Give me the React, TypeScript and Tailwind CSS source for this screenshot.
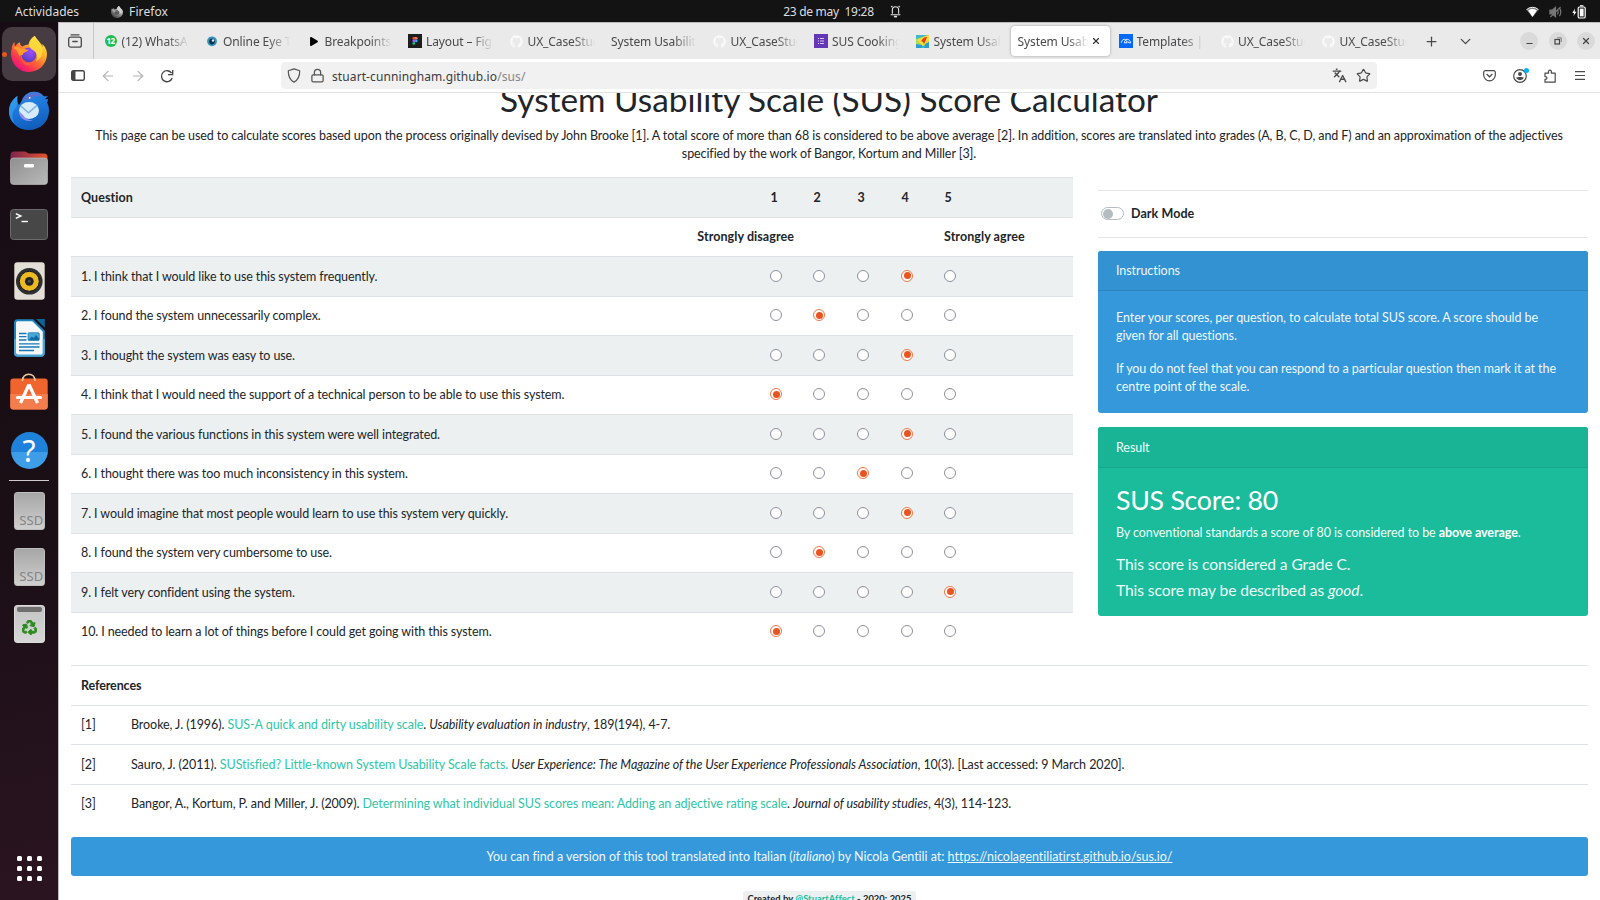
import type { ReactNode } from "react";
import { ArrowLeft, ArrowRight, Lock, Minus, Plus, ChevronDown, X, Star, Languages } from "lucide-react";
import { FaGithub, FaRecycle, FaPlay } from "react-icons/fa";

/* ---------- dock icons ---------- */

const FirefoxLogo = ({ className }: { className: string }) => (
  <svg viewBox="0 0 36 36" className={className}>
    <defs>
      <linearGradient id="ffBody" x1="0.85" y1="0.1" x2="0.2" y2="0.95">
        <stop offset="0" stopColor="#ffe73f" />
        <stop offset="0.3" stopColor="#ffb22c" />
        <stop offset="0.55" stopColor="#ff6b33" />
        <stop offset="0.8" stopColor="#fd2f56" />
        <stop offset="1" stopColor="#e60d8a" />
      </linearGradient>
      <radialGradient id="ffGlobe" cx="0.6" cy="0.3" r="0.8">
        <stop offset="0" stopColor="#a14bff" />
        <stop offset="1" stopColor="#4b3fb5" />
      </radialGradient>
    </defs>
    <path
      d="M34.6 12.6c-.8-1.9-2.300-3.900-3.600-4.500.4 1.100.7 2.200.8 3.200-1.900-4.800-5.200-6.700-7.800-11-.3-.4-.4-.7-.5-.3-4.200 2.400-5.600 6.300-5.800 8.400-2.500.1-4.600 1-6.300 2.100-2-.9-2.500-3.200-2.400-4.300C6.600 7 4.900 9.100 4.200 10.200c-.7-.9-.7-3-.6-4.300C1.900 7.300.8 10 .6 12.400l.5-.6C.3 14 .1 16 0 18.200.2 28 8.100 36 18 36c9.900 0 17.700-7.600 18-17.400 0-2.200-.4-4.200-1.400-6z"
      fill="url(#ffBody)"
    />
    <circle cx="18" cy="18.800" r="7.400" fill="url(#ffGlobe)" />
    <path d="M24 0c-4.500 3-6.400 7-5.300 11 1 2.800 4.500 3.200 6.300 6 1.500 2.600 1.400 5.700 0 8.200 4.600-2.300 6.700-6.600 6.300-11.500C30.600 8.500 26 5.500 24 0z" fill="#ffdc3e" opacity="0.85" />
    <path d="M2 12c3-2 5.500-1.500 8 .4 2.500.2 4.600.8 7.500 1.300-.4 1.600-3.500 2.600-4.400 3-1 .5-1 1.200-1 2.300-2.600-.8-3 .6-3.100 2C7 17 6 13 2 12z" fill="#ff9b2b" />
    <path d="M10 20c.6 4.700 5 7.500 9.500 6.500 2-.4 4-1.500 5.300-3.300-1 4.500-4.600 6.500-8 6.200-4.300-.4-7.300-4.900-6.800-9.400z" fill="#ff5a3c" />
  </svg>
);

const Thunderbird = () => (
  <svg viewBox="0 0 40 40" className="h-[40px] w-[40px]">
    <defs>
      <linearGradient id="tbBody" x1="0.3" y1="0" x2="0.6" y2="1">
        <stop offset="0" stopColor="#2f8be6" />
        <stop offset="0.5" stopColor="#1b74d8" />
        <stop offset="1" stopColor="#0f5cb8" />
      </linearGradient>
    </defs>
    <path d="M8.500 5C3.500 8-.5 14 0 22c.7 9.500 9 17 20 17s19.600-7.800 20-18.500c.1-3.500-.5-6.500-2-9 .7-.9 1-2.200 1-3.500l-3 .3c1-1 2-1.900 3-3.300-1.600.4-3 .4-4.500 0C32 1.500 28 .4 24 .8 18.500 1.300 15 4.500 13 9c-1 2-2 4-3 5-1.700-2.500-2.200-5.500-1.500-9z" fill="url(#tbBody)" />
    <path d="M14 9c2.500-5 7-7.800 13-7.200 3 .4 5 1.700 6.500 3.700-3-1.500-5-1.200-7.500-.3-4 1.600-5.500 4-12 3.800z" fill="#5a6fd0" />
    <path d="M8.500 5C3.500 8-.5 14 0 22c.6 4.300 2.500 8 5.500 10.600C2 26 3 20 7 16.500 9 12.500 7.800 9 8.500 5z" fill="#35a0ee" opacity="0.7" />
    <ellipse cx="20" cy="19.500" rx="10" ry="8.500" fill="#d7ecfb" />
    <path d="M11.500 14.800l8 7 8.800-7.600" fill="none" stroke="#7fb4e4" strokeWidth="1.600" />
    <path d="M10 20c0 7 6 11.500 14 9.500-6-1-8-2.500-9-4.500z" fill="#8f8df0" />
    <circle cx="20.700" cy="6.800" r="0.900" fill="#fff" />
  </svg>
);

const FilesIcon = () => (
  <svg viewBox="0 0 38 34" className="h-[34px] w-[38px]">
    <defs>
      <linearGradient id="fBack" x1="0" x2="1"><stop offset="0" stopColor="#7d2450" /><stop offset="1" stopColor="#e2542a" /></linearGradient>
      <linearGradient id="fFront" x1="0" y1="0" x2="1" y2="1"><stop offset="0" stopColor="#8f8f8f" /><stop offset="1" stopColor="#b9b9b9" /></linearGradient>
    </defs>
    <path d="M.5 4A3.500 3.500 0 0 1 4 .5h11l4 2h15A3.500 3.500 0 0 1 37.500 6v12H.5z" fill="url(#fBack)" />
    <rect x="0.500" y="7" width="37" height="26.500" rx="3" fill="url(#fFront)" stroke="#c4c4c4" strokeWidth="0.600" />
    <rect x="14" y="13" width="10" height="3.600" rx="1.300" fill="#fff" />
  </svg>
);

const TerminalIcon = () => (
  <svg viewBox="0 0 38 31" className="h-[31px] w-[38px]">
    <rect x="0.500" y="0.500" width="37" height="30" rx="3" fill="#474747" stroke="#6b6b6b" />
    <path d="M5.800 4.600l5 2.400-5 2.400" fill="none" stroke="#fff" strokeWidth="1.500" />
    <path d="M11.500 12.500h6.500" stroke="#fff" strokeWidth="1.400" />
  </svg>
);

const SpeakerIcon = () => (
  <svg viewBox="0 0 31 38" className="h-[38px] w-[31px]">
    <rect x="0.300" y="0.300" width="30.400" height="37.400" rx="3" fill="#e3dfd6" />
    <circle cx="15.300" cy="19.300" r="13.300" fill="#2e2f33" />
    <circle cx="15.300" cy="19.300" r="10" fill="#edbb21" />
    <circle cx="15.300" cy="19.300" r="10" fill="none" stroke="#17181b" strokeWidth="1" />
    <circle cx="15.300" cy="19.300" r="4.400" fill="#222327" />
    <circle cx="15.300" cy="19.300" r="1.500" fill="#4a4b50" />
  </svg>
);

const WriterIcon = () => (
  <svg viewBox="0 0 31 38" className="h-[38px] w-[31px]">
    <path d="M22 0h8.800v8.800z" fill="#0c6596" />
    <path d="M3.500 1.200h15.300l11 11V34a2.800 2.800 0 0 1-2.800 2.800H3.800A2.800 2.800 0 0 1 1 34V4a2.700 2.700 0 0 1 2.500-2.800z" fill="#f6f8fa" stroke="#1d84bd" strokeWidth="2" />
    <path d="M1 20v14a2.800 2.800 0 0 0 2.800 2.800H27a2.800 2.800 0 0 0 2.800-2.800V20" fill="none" stroke="#4ba7d6" strokeWidth="2" />
    <path d="M5 14.500h7.500M5 17.700h7.500M5 21h7.500M5 24.800h20.500M5 28h20.500M5 31.500h15" stroke="#1679b5" strokeWidth="1.300" />
    <rect x="14" y="13.700" width="11.300" height="7.800" rx="1" fill="#4ba7d6" stroke="#1679b5" strokeWidth="0.700" />
    <path d="M14.500 21l3.300-3.500 1.800 1.500 2.400-3 3 3.500V21z" fill="#0f6ba4" />
  </svg>
);

const SoftwareIcon = () => (
  <svg viewBox="0 0 38 37" className="mb-[5px] h-[37px] w-[38px]">
    <path d="M12.500 8c0-4 2.500-6.800 6.300-6.800S25 4 25 8" fill="none" stroke="#ecc9a0" strokeWidth="1.500" />
    <rect x="0.300" y="5.500" width="37.400" height="31" rx="3" fill="#f0642e" />
    <path d="M.3 21h37.400v12.500a3 3 0 0 1-3 3H3.300a3 3 0 0 1-3-3z" fill="#f37d4c" />
    <path d="M12.500 8c0-1.500.3-2.700.8-3.600M25 8c0-1.500-.3-2.700-.8-3.600" fill="none" stroke="#ecc9a0" strokeWidth="1.500" />
    <path d="M19 11.500L10.500 30M19 11.500L27.500 30" stroke="#fff" strokeWidth="3.300" fill="none" strokeLinejoin="round" />
    <path d="M7.500 24.500h23" stroke="#fff" strokeWidth="3.200" strokeLinecap="round" />
  </svg>
);

const HelpIcon = () => (
  <div className="flex h-[37px] w-[37px] items-center justify-center rounded-full bg-[linear-gradient(#1f82da_0_55%,#3d9de6_55%_100%)] font-['Noto_Sans',sans-serif] text-[30px] leading-none text-white">
    ?
  </div>
);

const SsdIcon = () => (
  <div className="flex h-[38px] w-[31px] items-end justify-end overflow-hidden rounded-[3px] border border-[#bdbdbd] bg-[linear-gradient(#a6a6a6,#cfcfcf)] font-['Noto_Sans',sans-serif] text-[13px] leading-[17px] tracking-[0.2px] text-[#858585]">
    SSD
  </div>
);

const TrashIcon = () => (
  <div className="flex h-[38px] w-[31px] flex-col items-center rounded-[3px] border border-[#dcdcdc] bg-[linear-gradient(#c4c4c4,#d6d6d6)] pt-px">
    <div className="h-[5px] w-[25px] rounded-[2px] bg-[#6f6f6f]" />
    <FaRecycle className="mt-[8px] h-[15px] w-[15px] text-[#2b8a1e]" stroke="#2b8a1e" strokeWidth={34} />
  </div>
);

const dockItems: ReactNode[] = [<Thunderbird />, <FilesIcon />, <TerminalIcon />, <SpeakerIcon />, <WriterIcon />, <SoftwareIcon />, <HelpIcon />];
const mountItems: ReactNode[] = [<SsdIcon />, <SsdIcon />, <TrashIcon />];

function Dock() {
  return (
    <aside className="flex w-[58px] shrink-0 flex-col items-center bg-[linear-gradient(165deg,#170c13_0%,#1b0f16_60%,#2a1420_100%)] pt-[5px]">
      <div className="relative flex h-[54px] w-[54px] items-center justify-center rounded-[10px] bg-[#463c42]">
        <FirefoxLogo className="h-[36px] w-[36px]" />
        <span className="absolute left-0 top-[25px] h-[5px] w-[5px] rounded-full bg-[#e95420]" />
      </div>
      <div className="mt-[2px] flex flex-col">
        {dockItems.map((icon, i) => (
          <div key={i} className="flex h-[56.600px] items-center justify-center">{icon}</div>
        ))}
      </div>
      <div className="mt-px h-px w-[40px] bg-[#cfcbcd]" />
      <div className="mt-px flex flex-col">
        {mountItems.map((icon, i) => (
          <div key={i} className="flex h-[56.700px] items-center justify-center">{icon}</div>
        ))}
      </div>
      <div className="mb-[19px] mt-auto grid grid-cols-3 gap-[5px]">
        {Array.from({ length: 9 }, (_, i) => (
          <span key={i} className="h-[5px] w-[5px] rounded-[1.500px] bg-white" />
        ))}
      </div>
    </aside>
  );
}

/* ---------- top bar ---------- */

function TopBar() {
  return (
    <header className="grid h-[22px] shrink-0 grid-cols-3 items-center bg-[#131313] pt-px font-['Noto_Sans',sans-serif] text-[12px] leading-[21px] text-[#dedede]">
      <div className="flex items-center pl-[15px]">
        <span>Actividades</span>
        <FirefoxLogo className="ml-[32px] h-[12px] w-[12px] grayscale" />
        <span className="ml-[6px] tracking-[0.100px]">Firefox</span>
      </div>
      <div className="flex items-center justify-center pl-[84px]">
        <span className="whitespace-pre tracking-[-0.280px]">23 de may  19:28</span>
        <svg viewBox="0 0 14 16" className="ml-[16px] h-[13px] w-[11px]" fill="none" stroke="#e5e5e5" strokeWidth="1.400">
          <path d="M3 11V6a4 4 0 0 1 8 0v5M.8 12.200h12.400M1.500 2.500L3 1M12.500 2.500L11 1" />
          <path d="M5 14.500h4" strokeWidth="2" />
        </svg>
      </div>
      <div className="flex items-center justify-end gap-[10px] pr-[14px]">
        <svg viewBox="0 0 14 12" className="h-[12px] w-[13px]">
          <path d="M.5 3.500a9.500 9.500 0 0 1 13 0L7 11.500z" fill="#777" />
          <path d="M2.300 4.500a7.500 7.500 0 0 1 9.400 0L7 11.500z" fill="#fff" />
          <path d="M.5 3.500a9.500 9.500 0 0 1 13 0" fill="none" stroke="#fff" strokeWidth="1" />
        </svg>
        <svg viewBox="0 0 14 13" className="h-[12px] w-[13px]" fill="none" stroke="#777" strokeWidth="1.300">
          <path d="M1 4.500h2.500L7 1.500v10L3.500 8.500H1z" fill="#777" />
          <path d="M9 4c1 1.500 1 3.500 0 5M11.300 2c1.700 2.700 1.700 6.300 0 9M1.500 12L12.500 1" />
        </svg>
        <svg viewBox="0 0 14 14" className="h-[14px] w-[14px]">
          <path d="M3 3.500L.3 8h1.900L1.400 11 4.500 6.700H2.600z" fill="#fff" />
          <rect x="6.200" y="2" width="7" height="11" rx="1.300" fill="none" stroke="#fff" strokeWidth="1.200" />
          <rect x="7.800" y="3.600" width="3.800" height="7.800" fill="#fff" />
          <path d="M8 .8h3.400" stroke="#fff" strokeWidth="1.200" />
        </svg>
      </div>
    </header>
  );
}

/* ---------- browser chrome ---------- */

const Whats = () => (
  <span className="flex h-[12px] w-[12px] items-center justify-center rounded-full bg-[#1fbe54] text-[8px] font-bold leading-none tracking-[-0.500px] text-white">12</span>
);
const Eye = () => (
  <svg viewBox="0 0 13 13" className="h-[13px] w-[13px]">
    <circle cx="6" cy="6.300" r="4.900" fill="#3795c0" />
    <circle cx="6" cy="6.500" r="2.900" fill="#12354b" />
    <circle cx="7" cy="5.500" r="1.200" fill="#d8eef8" />
  </svg>
);
const Figma = () => (
  <svg viewBox="0 0 14 14" className="h-[14px] w-[14px]">
    <rect width="14" height="14" fill="#1e1e1e" />
    <path d="M7 3H5.700a1.300 1.300 0 0 0 0 2.600H7z" fill="#f24e1e" />
    <path d="M7 3h1.300a1.300 1.300 0 0 1 0 2.600H7z" fill="#ff7262" />
    <path d="M7 5.600H5.700a1.300 1.300 0 0 0 0 2.600H7z" fill="#a259ff" />
    <circle cx="8.300" cy="6.900" r="1.300" fill="#1abcfe" />
    <path d="M7 8.200H5.700A1.300 1.300 0 1 0 7 9.500z" fill="#0acf83" />
  </svg>
);
const Git = () => <FaGithub className="h-[13px] w-[13px] text-[#f9f9f9]" />;
const FormIcon = () => (
  <svg viewBox="0 0 14 14" className="h-[14px] w-[14px]">
    <rect width="14" height="14" fill="#6337b5" />
    <path d="M4 4.500h1M4 7h1M4 9.500h1M6 4.500h4M6 7h4M6 9.500h4" stroke="#d6c8f0" strokeWidth="1" />
  </svg>
);
const HeatIcon = () => (
  <svg viewBox="0 0 13 13" className="h-[13px] w-[13px]">
    <rect width="13" height="13" fill="#41b8c9" />
    <path d="M0 4L13 0v7L3 13H0z" fill="#a6dc5a" />
    <path d="M1 5l8-4 4-1v6l-5 5-4-3z" fill="#f3dd39" />
    <path d="M5 6l3-3.500 3-.5-1.500 4-1.500 3-1-2z" fill="#ea3a22" />
    <path d="M0 9l6 1v3H0zM9 9l4-2v6H8z" fill="#2c9ccf" />
  </svg>
);
const Maze = () => (
  <svg viewBox="0 0 14 14" className="h-[14px] w-[14px]">
    <rect width="14" height="14" fill="#0568fd" />
    <path d="M2.300 8.800c.3-1.900 1.400-3.500 3-3.500 1.500 0 2 1.300 2.800 3.500H5.300c.3-1.900 1.400-3.500 3-3.500s3 1.500 3.400 3.500H9.800c-.2-.9-.6-1.400-1.300-1.400" fill="none" stroke="#fff" strokeWidth="0.900" />
  </svg>
);

type TabInfo = { label: string; icon?: ReactNode; active?: boolean };
const tabs: TabInfo[] = [
  { label: "(12) WhatsApp", icon: <Whats /> },
  { label: "Online Eye Tracking", icon: <Eye /> },
  { label: "Breakpoints ", icon: <FaPlay className="h-[9px] w-[10px] text-black" /> },
  { label: "Layout – Figma", icon: <Figma /> },
  { label: "UX_CaseStudy", icon: <Git /> },
  { label: "System Usability Scale" },
  { label: "UX_CaseStudy", icon: <Git /> },
  { label: "SUS Cooking", icon: <FormIcon /> },
  { label: "System Usability", icon: <HeatIcon /> },
  { label: "System Usability", active: true },
  { label: "Templates | Maze", icon: <Maze /> },
  { label: "UX_CaseStudy", icon: <Git /> },
  { label: "UX_CaseStudy", icon: <Git /> },
];

const fade = "min-w-0 flex-1 overflow-hidden whitespace-nowrap pt-px [mask-image:linear-gradient(90deg,#000_calc(100%-22px),transparent)]";

function Tab({ label, icon, active }: TabInfo) {
  return (
    <div className="flex h-[31px] w-[101.500px] shrink-0 items-center pr-[2px]">
      <div className={active ? "flex h-[30px] w-full items-center rounded-[4px] bg-white pl-[7px] pr-[9px] shadow-[0_0_3px_rgba(0,0,0,0.350)]" : "flex h-[30px] w-full items-center pl-[6.500px] pr-[8px]"}>
        {icon && <span className="mr-[4px] flex w-[14px] justify-center">{icon}</span>}
        <span className={fade}>{label}</span>
        {active && <X className="ml-[2px] h-[10px] w-[10px] text-[#333]" strokeWidth={2.800} />}
      </div>
    </div>
  );
}

function TabStrip() {
  return (
    <div className="flex h-[36px] shrink-0 items-center bg-[#eaeaea] text-[12px] tracking-[-0.100px] text-[#4a4a4c]">
      <div className="flex h-full w-[35px] items-center justify-center border-r border-[#c9c9c9] pr-[2px]">
        <svg viewBox="0 0 14 14" className="h-[14px] w-[14px]" fill="none" stroke="#4a4a4c" strokeWidth="1.300">
          <path d="M3 .8h8" strokeLinecap="round" />
          <rect x="0.700" y="3.200" width="12.600" height="10" rx="2" />
          <path d="M4.800 7.500h4.400" strokeLinecap="round" />
        </svg>
      </div>
      <div className="ml-[3px] flex">
        {tabs.map((t, i) => (
          <Tab key={i} {...t} />
        ))}
      </div>
      <Plus className="ml-[7px] h-[15px] w-[15px] text-[#4a4a4c]" strokeWidth={2} />
      <ChevronDown className="ml-[18px] h-[17px] w-[17px] text-[#4a4a4c]" strokeWidth={1.900} />
      <div className="ml-auto flex gap-[10.500px] pr-[5px] text-[#444]">
        <span className="flex h-[18px] w-[18px] items-center justify-center rounded-full bg-[#dadada]"><Minus className="mt-[4px] h-[9px] w-[9px]" strokeWidth={3} /></span>
        <span className="flex h-[18px] w-[18px] items-center justify-center rounded-full bg-[#dadada]">
          <svg viewBox="0 0 8 8" className="h-[8px] w-[8px]" fill="none" stroke="#444" strokeWidth="1.200"><rect x="1" y="2.500" width="4.500" height="4.500" /><path d="M3 .800h4.200V5" strokeWidth="0.600" /></svg>
        </span>
        <span className="flex h-[18px] w-[18px] items-center justify-center rounded-full bg-[#dadada]"><X className="h-[10px] w-[10px]" strokeWidth={3} /></span>
      </div>
    </div>
  );
}

function Toolbar() {
  return (
    <div className="flex h-[34px] shrink-0 items-center border-b border-[#e2e2e2] bg-white pl-[12px] pr-[15px] text-[#4a4a4c]">
      <svg viewBox="0 0 14 11" className="h-[11px] w-[14px]"><rect x="0.700" y="0.700" width="12.600" height="9.600" rx="1.500" fill="none" stroke="#444" strokeWidth="1.400" /><path d="M1 1h3.500v9H1z" fill="#444" /></svg>
      <ArrowLeft className="ml-[15px] h-[16px] w-[16px] text-[#b4b4b5]" strokeWidth={1.800} />
      <ArrowRight className="ml-[14px] h-[16px] w-[16px] text-[#b4b4b5]" strokeWidth={1.800} />
      <svg viewBox="0 0 14 14" className="ml-[14px] h-[14px] w-[14px]" fill="none" stroke="#444" strokeWidth="1.300"><path d="M12.200 9A5.500 5.500 0 1 1 11.600 4.200" /><path d="M12.700 1v4.700H8" /></svg>
      <div className="ml-[107px] flex h-[27px] w-[1096px] items-center rounded-[4px] bg-[#f1f1f1] pl-[6px] pr-[6px]">
        <svg viewBox="0 0 14 15" className="h-[15px] w-[14px]" fill="none" stroke="#555" strokeWidth="1.200" strokeLinejoin="round"><path d="M7 .9l5.700 1.900c.1 5.500-1.500 9.300-5.700 11.300C2.800 12.100 1.200 8.300 1.300 2.800z" /></svg>
        <Lock className="ml-[9px] h-[15px] w-[15px] text-[#555]" strokeWidth={2} />
        <span className="ml-[7px] pt-[2px] text-[12px] tracking-[0.100px] text-[#3c3c3e]">
          stuart-cunningham.github.io<span className="text-[#86868a]">/sus/</span>
        </span>
        <Languages className="ml-auto h-[15px] w-[15px]" strokeWidth={2.200} />
        <Star className="ml-[9px] h-[15px] w-[15px]" strokeWidth={1.900} />
      </div>
      <svg viewBox="0 0 13 12" className="ml-auto h-[12px] w-[13px]" fill="none" stroke="#4a4a4c" strokeWidth="1.200" strokeLinecap="round"><path d="M2.200.7h8.600a1.500 1.500 0 0 1 1.500 1.500V5a5.800 5.800 0 0 1-11.600 0V2.200A1.500 1.500 0 0 1 2.200.7z" /><path d="M3.900 4.300l2.600 2.500 2.600-2.500" /></svg>
      <div className="relative ml-[17px]">
        <svg viewBox="0 0 14 14" className="h-[14px] w-[14px]"><circle cx="7" cy="7" r="6.300" fill="none" stroke="#4a4a4c" strokeWidth="1.200" /><circle cx="7" cy="5" r="2" fill="#4a4a4c" /><path d="M3 8.800c1-1 7-1 8 0a4.600 4.600 0 0 1-8 0z" fill="#4a4a4c" /></svg>
        <span className="absolute -right-[2px] -top-[1px] h-[5px] w-[5px] rounded-full bg-[#00b3f4]" />
      </div>
      <svg viewBox="0 0 12 14" className="ml-[17px] h-[14px] w-[12px]" fill="none" stroke="#4a4a4c" strokeWidth="1.200" strokeLinejoin="round"><path d="M1 13.200V10.300c2.600.3 2.600-3 0-2.700V4.200h3.600C3.600 0 8.300 0 7.300 4.200h3.900v9z" /></svg>
      <svg viewBox="0 0 10 9" className="ml-[19px] h-[9px] w-[10px]" stroke="#4a4a4c" strokeWidth="1.200"><path d="M0 .7h10M0 4.500h10M0 8.300h10" /></svg>
    </div>
  );
}

/* ---------- page ---------- */

const questions: { text: string; value: number }[] = [
  { text: "1. I think that I would like to use this system frequently.", value: 4 },
  { text: "2. I found the system unnecessarily complex.", value: 2 },
  { text: "3. I thought the system was easy to use.", value: 4 },
  { text: "4. I think that I would need the support of a technical person to be able to use this system.", value: 1 },
  { text: "5. I found the various functions in this system were well integrated.", value: 4 },
  { text: "6. I thought there was too much inconsistency in this system.", value: 3 },
  { text: "7. I would imagine that most people would learn to use this system very quickly.", value: 4 },
  { text: "8. I found the system very cumbersome to use.", value: 2 },
  { text: "9. I felt very confident using the system.", value: 5 },
  { text: "10. I needed to learn a lot of things before I could get going with this system.", value: 1 },
];

const scale = [1, 2, 3, 4, 5];
const cols = "grid grid-cols-[689px_43px_44px_44px_43px_139px] items-center border-t border-[#dee2e6]";

function Radio({ on }: { on: boolean }) {
  return on ? (
    <span role="radio" aria-checked="true" className="mb-[2px] ml-[10px] flex h-[12px] w-[12px] items-center justify-center rounded-full border border-[#f07746] bg-white">
      <span className="h-[7px] w-[7px] rounded-full bg-[#e95420]" />
    </span>
  ) : (
    <span role="radio" aria-checked="false" className="mb-[2px] ml-[10px] h-[12px] w-[12px] rounded-full border border-[#8f8f9d] bg-white" />
  );
}

function QuestionTable() {
  return (
    <div className="w-[1002px] shrink-0">
      <div className={`${cols} h-[40px] bg-[#ecf0f1] pt-px font-bold`}>
        <span className="pl-[10px] tracking-[0.070px]">Question</span>
        {scale.map((n) => (
          <span key={n} className="pl-[10.500px]">{n}</span>
        ))}
      </div>
      <div className={`${cols} h-[39px] font-bold tracking-[0.070px]`}>
        <span className="col-span-2 w-[723px] text-right">Strongly disagree</span>
        <span className="col-span-3" />
        <span className="pl-[10px]">Strongly agree</span>
      </div>
      {questions.map((q, i) => (
        <div key={q.text} className={i % 2 === 0 ? `${cols} h-[40px] bg-[#ecf0f1]` : `${cols} h-[39px]`}>
          <span className={i % 2 === 0 ? "pl-[10px] pt-[2px]" : "pl-[10px]"}>{q.text}</span>
          {scale.map((n) => (
            <Radio key={n} on={q.value === n} />
          ))}
        </div>
      ))}
    </div>
  );
}

function SidePanel() {
  return (
    <div className="w-[490px] pt-[13px]">
      <div className="flex h-[48px] items-center border-y border-[#e3e5e7] pl-[3px]">
        <span className="mb-px flex h-[13px] w-[23px] items-center rounded-full border border-[#b4bcc2] bg-white pl-px">
          <span className="h-[10px] w-[10px] rounded-full bg-[#b4bcc2]" />
        </span>
        <span className="ml-[7px] font-bold tracking-[0.080px]">Dark Mode</span>
      </div>
      <section className="mt-[13px] h-[162px] overflow-hidden rounded-[3px] bg-[#3498db] tracking-[-0.070px] text-[#eff7fc]">
        <h2 className="flex h-[40px] items-center border-b border-[#2d83bd] bg-[#3292d2] pl-[18px] pt-[2px]">Instructions</h2>
        <div className="pl-[18px] pt-[18px] leading-[18.330px]">
          <p>Enter your scores, per question, to calculate total SUS score. A score should be<br />given for all questions.</p>
          <p className="mt-[14px]">If you do not feel that you can respond to a particular question then mark it at the<br />centre point of the scale.</p>
        </div>
      </section>
      <section className="mt-[14px] h-[189px] overflow-hidden rounded-[3px] bg-[#1abc9c] tracking-[-0.070px] text-[#effbf8]">
        <h2 className="flex h-[41px] items-center border-b border-[#17a689] bg-[#19b496] pl-[18px] pt-[2px]">Result</h2>
        <div className="pl-[18px] pt-[15px]">
          <p className="text-[26.700px] leading-[34px] tracking-[-0.250px] text-white">SUS Score: 80</p>
          <p className="mt-[7px] leading-[18px]">By conventional standards a score of 80 is considered to be <b className="text-white">above average</b>.</p>
          <p className="mt-[9px] text-[15.600px] leading-[26px] tracking-[-0.080px]">This score is considered a Grade C.<br />This score may be described as <i>good</i>.</p>
        </div>
      </section>
    </div>
  );
}

const Cite = ({ children }: { children: ReactNode }) => <a className="text-[#2fc6a8]">{children}</a>;

function References() {
  const row = "flex items-center border-t border-[#dee2e6] pl-[10px]";
  return (
    <div className="mt-[14px] tracking-[-0.070px]">
      <div className={`${row} h-[40px] pt-[2px] font-bold tracking-[-0.110px]`}>References</div>
      <div className={`${row} h-[39px]`}>
        <span className="w-[50px]">[1]</span>
        <span>Brooke, J. (1996). <Cite>SUS-A quick and dirty usability scale</Cite>. <i>Usability evaluation in industry</i>, 189(194), 4-7.</span>
      </div>
      <div className={`${row} h-[40px] pt-[2px]`}>
        <span className="w-[50px]">[2]</span>
        <span>Sauro, J. (2011). <Cite>SUStisfied? Little-known System Usability Scale facts.</Cite> <i>User Experience: The Magazine of the User Experience Professionals Association</i>, 10(3). [Last accessed: 9 March 2020].</span>
      </div>
      <div className={`${row} h-[39px]`}>
        <span className="w-[50px]">[3]</span>
        <span>Bangor, A., Kortum, P. and Miller, J. (2009). <Cite>Determining what individual SUS scores mean: Adding an adjective rating scale</Cite>. <i>Journal of usability studies</i>, 4(3), 114-123.</span>
      </div>
    </div>
  );
}

function Page() {
  return (
    <main className="min-h-0 flex-1 overflow-hidden bg-white pl-[12px] pr-[12px] font-[Lato,sans-serif] text-[12.500px] leading-[18.330px] tracking-[-0.100px] text-[#212529]">
      <h1 className="-mt-[14px] h-[41px] pr-[1px] text-center text-[33.350px] leading-[41px] tracking-normal">System Usability Scale (SUS) Score Calculator</h1>
      <p className="mt-[6.500px] pr-[1px] text-center tracking-[-0.092px]">
        This page can be used to calculate scores based upon the process originally devised by John Brooke [1]. A total score of more than 68 is considered to be above average [2]. In addition, scores are translated into grades (A, B, C, D, and F) and an approximation of the adjectives<br />
        specified by the work of Bangor, Kortum and Miller [3].
      </p>
      <div className="mt-[14px] flex gap-[25px]">
        <QuestionTable />
        <SidePanel />
      </div>
      <References />
      <div className="mt-[14px] flex h-[39px] items-center justify-center rounded-[3px] bg-[#3498db] pt-px tracking-[-0.015px] text-[#eff7fc]">
        <span>You can find a version of this tool translated into Italian (<i>italiano</i>) by Nicola Gentili at: <a className="underline">https://nicolagentiliatirst.github.io/sus.io/</a></span>
      </div>
      <div className="mt-[15px] flex justify-center">
        <span className="h-[16px] rounded-[3px] bg-[#ecf0f1] px-[5px] text-[9.375px] font-bold leading-[15px] tracking-[0.030px]">
          Created by <a className="text-[#1abc9c]">@StuartAffect</a> - 2020; 2025
        </span>
      </div>
    </main>
  );
}

export default function App() {
  return (
    <div className="flex h-[900px] w-[1600px] flex-col overflow-hidden bg-[#131313]">
      <TopBar />
      <div className="flex min-h-0 flex-1">
        <Dock />
        <div className="flex min-w-0 flex-1 flex-col border-l border-t border-[#bdbdbd] font-['Noto_Sans',sans-serif]">
          <TabStrip />
          <Toolbar />
          <Page />
        </div>
      </div>
    </div>
  );
}
